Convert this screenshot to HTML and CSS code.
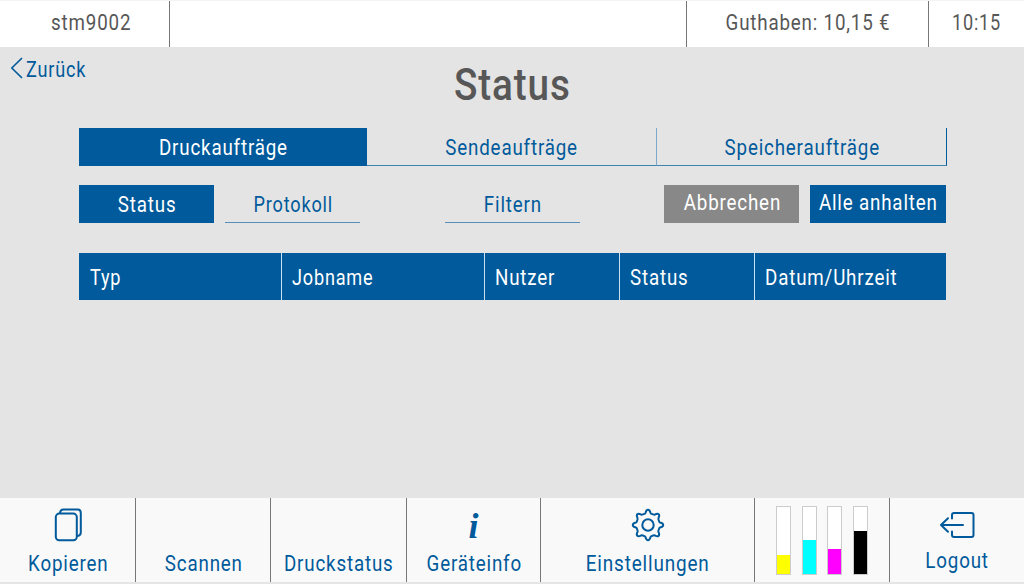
FILE: index.html
```html
<!DOCTYPE html>
<html lang="de">
<head>
<meta charset="utf-8">
<title>Status</title>
<link rel="stylesheet" href="styles.css">
</head>
<body>
<div class="screen">
  <header class="topbar">
    <div class="cell user"><span class="t">stm9002</span></div>
    <div class="cell"></div>
    <div class="cell"><span class="t">Guthaben: 10,15 €</span></div>
    <div class="cell last"><span class="t narrow">10:15</span></div>
  </header>
  <main class="content">
    <a class="back"><svg width="13" height="22" viewBox="0 0 13 22"><path d="M11.5 1.5 1.8 11l9.700 9.500"/></svg><span class="t left narrow">Zurück</span></a>
    <h1 class="title"><span class="t">Status</span></h1>
    <nav class="tabs">
      <div class="tab active"><span class="t">Druckaufträge</span></div>
      <div class="tab"><span class="t">Sendeaufträge</span></div>
      <div class="tab end"><span class="t">Speicheraufträge</span></div>
    </nav>
    <div class="actions">
      <div class="btn solid"><span class="t">Status</span></div>
      <div class="btn line"><span class="t narrow">Protokoll</span></div>
      <div class="btn line filter"><span class="t">Filtern</span></div>
      <div class="btn solid grey raised"><span class="t">Abbrechen</span></div>
      <div class="btn solid raised"><span class="t">Alle anhalten</span></div>
    </div>
    <div class="thead">
      <div><span class="t left narrow">Typ</span></div>
      <div><span class="t left narrow">Jobname</span></div>
      <div><span class="t left">Nutzer</span></div>
      <div><span class="t left">Status</span></div>
      <div><span class="t left">Datum/Uhrzeit</span></div>
    </div>
  </main>
  <footer class="bottombar">
    <div class="nav"><svg class="icon" width="34" height="36" viewBox="0 0 34 36"><rect x="4.800" y="6.600" width="21" height="26.600" rx="3.500"/><path d="M9 5.800Q9.500 2.600 12.500 2.600H26.500Q29.800 2.600 29.800 5.900V25.500Q29.800 28.500 26.500 29"/></svg><span class="t">Kopieren</span></div>
    <div class="nav"><span class="t">Scannen</span></div>
    <div class="nav"><span class="t">Druckstatus</span></div>
    <div class="nav"><span class="info">i</span><span class="t">Geräteinfo</span></div>
    <div class="nav"><svg class="icon" width="34" height="36" viewBox="-17 -18 34 36"><circle r="5.700"/><path d="M-3-11.400C-2-12-2.500-15.200 0-15.200S2-12 3-11.400C5-10.500 5.800-10 7-10.500C8-11 9.500-11.800 10.700-10.700S11-8 10.500-7C10-5.800 10.500-5 11.400-3C12-2 15.200-2.500 15.200 0S12 2 11.400 3C10.500 5 10 5.800 10.500 7C11 8 11.800 9.500 10.700 10.700S8 11 7 10.500C5.800 10 5 10.500 3 11.400C2 12 2.500 15.200 0 15.200S-2 12-3 11.400C-5 10.500-5.800 10-7 10.500C-8 11-9.500 11.800-10.700 10.700S-11 8-10.500 7C-10 5.800-10.500 5-11.400 3C-12 2-15.200 2.500-15.200 0S-12-2-11.400-3C-10.500-5-10-5.800-10.500-7C-11-8-11.800-9.500-10.700-10.700S-8-11-7-10.500C-5.800-10-5-10.500-3-11.400Z"/></svg><span class="t wide">Einstellungen</span></div>
    <div class="toners">
      <div class="toner"><i class="yellow"></i></div>
      <div class="toner"><i class="cyan"></i></div>
      <div class="toner"><i class="magenta"></i></div>
      <div class="toner"><i class="black"></i></div>
    </div>
    <div class="nav logout"><svg class="icon" width="36" height="36" viewBox="0 0 36 36"><path d="M13 11.500V8Q13 6 15 6H32.500Q34.500 6 34.500 8V28Q34.500 30 32.500 30H15Q13 30 13 28V24.500M24 18H2M9 11.300 2 18l7 6.700"/></svg><span class="t">Logout</span></div>
  </footer>
</div>
</body>
</html>
```
FILE: styles.css
```css
* { box-sizing: border-box; }
body { margin: 0; background: #e4e4e4; font-family: Roboto, "Liberation Sans", sans-serif; font-size: 22.500px; line-height: 26px; color: #005a9b; }
.screen { width: 1024px; height: 584px; display: flex; flex-direction: column; overflow: hidden; }
.t { display: inline-block; white-space: nowrap; letter-spacing: 1px; margin-right: -1px; transform: scaleX(.833); }
.narrow { transform: scaleX(.805); }
.wide { transform: scaleX(.84); }
.left { transform-origin: left; }
.topbar { height: 47px; display: grid; grid-template-columns: 170px 517px 242px 95px; background: #fff; color: #575757; border-top: 1px solid #f4f4f4; }
.cell { display: flex; justify-content: center; padding-top: 8px; border-right: 1px solid #777; }
.cell.user { padding-left: 12px; }
.cell.last { border: 0; }
.content { height: 451px; padding-top: 9px; }
.back { display: flex; height: 26px; padding-left: 10px; gap: 3px; }
.back svg, .icon { fill: none; stroke: #005a9b; stroke-width: 2; stroke-linecap: round; stroke-linejoin: round; }
.back svg { stroke-width: 1.7; margin-top: 1px; }
.title { margin: -25px 0 0; height: 71px; padding-top: 2px; line-height: 52px; font-size: 44px; font-weight: 500; color: #575757; text-align: center; }
.title .t { transform: scaleX(.88); }
.tabs { display: grid; grid-template-columns: 288px 290px 290px; margin-left: 79px; height: 38px; width: 868px; }
.tab { display: flex; justify-content: center; padding-top: 6px; border-bottom: 1px solid #4084b2; border-right: 1px solid #7ba7ca; }
.tab.active { background: #005a9b; color: #fff; border: 0; }
.tab.end { border-right-color: #005a9b; }
.actions { display: flex; margin: 19px 0 0 79px; width: 867px; height: 38px; }
.btn { width: 135px; display: flex; justify-content: center; padding-top: 6px; }
.line { margin-left: 11px; border-bottom: 1px solid #568eb9; }
.filter { margin-left: 85px; }
.solid { background: #005a9b; color: #fff; }
.grey { background: #888; margin-left: 84px; }
.raised { padding-top: 4px; }
.raised:last-child { width: 136px; margin-left: 11px; }
.thead { display: grid; grid-template-columns: 203px 203px 135px 135px 191px; margin: 30px 0 0 79px; width: 867px; height: 47px; background: #005a9b; color: #fff; }
.thead div { padding: 11px 0 0 10px; border-right: 1px solid #c5e1f2; }
.thead div:first-child { padding-left: 11px; }
.thead div:last-child { border: 0; }
.bottombar { height: 86px; display: grid; grid-template-columns: 136px 135px 136px 134px 214px 135px 134px; background: #f9f9f9; border-bottom: 2px solid #e5e5e5; }
.nav { display: flex; flex-direction: column; align-items: center; justify-content: flex-end; padding-bottom: 6px; border-right: 1px solid #777; }
.icon { margin-bottom: 7px; }
.info { font: italic bold 36px/38px "Liberation Serif", serif; margin-bottom: 5px; }
.logout { border: 0; padding-bottom: 9px; }
.logout .icon { margin-bottom: 4px; }
.toners { display: flex; justify-content: space-between; padding: 8px 21px 7px; border-right: 1px solid #777; }
.toner { width: 15px; height: 69px; background: #fff; border: 1px solid #ccc; display: flex; align-items: flex-end; }
.toner i { display: block; width: 100%; }
.yellow { height: 19px; background: #ff0; }
.cyan { height: 34px; background: #0ff; }
.magenta { height: 25px; background: #f0f; }
.black { height: 43px; background: #000; }
```
